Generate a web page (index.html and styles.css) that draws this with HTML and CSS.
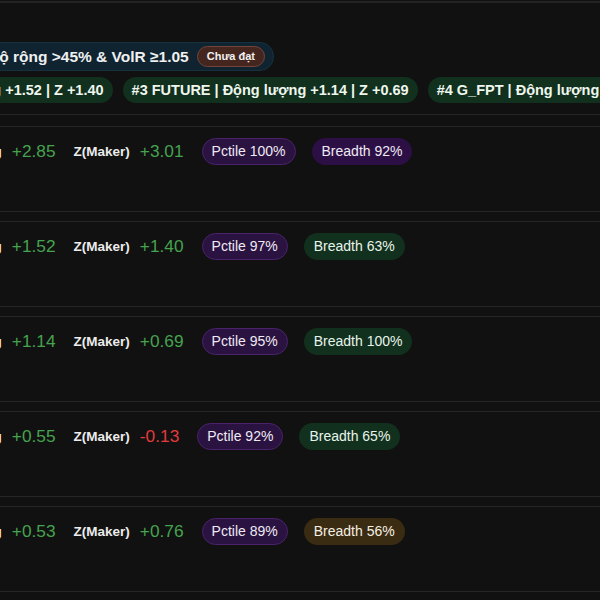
FILE: index.html
```html
<!DOCTYPE html>
<html lang="vi">
<head>
    <meta charset="UTF-8">
    <meta name="viewport" content="width=device-width, initial-scale=1.0">
    <title>Bảng xếp hạng động lượng</title>
    <link rel="stylesheet" href="styles.css">
</head>
<body>
    <div class="board">
        <div class="summary">
            <div class="condition">
                <span class="condition-text">Độ rộng &gt;45% &amp; VolR ≥1.05</span>
                <span class="badge-fail">Chưa đạt</span>
            </div>
            <div class="leaders">
                <span class="leader">#2 VN30 | Động lượng +1.52 | Z +1.40</span>
                <span class="leader">#3 FUTURE | Động lượng +1.14 | Z +0.69</span>
                <span class="leader">#4 G_FPT | Động lượng +0.55 | Z -0.13</span>
            </div>
        </div>

        <div class="rows">
            <div class="row">
                <div class="metrics">
                    <span class="label">Động lượng</span>
                    <span class="value up">+2.85</span>
                    <span class="label">Z(Maker)</span>
                    <span class="value up">+3.01</span>
                    <span class="pill pctile">Pctile 100%</span>
                    <span class="pill breadth-purple">Breadth 92%</span>
                </div>
            </div>
            <div class="row">
                <div class="metrics">
                    <span class="label">Động lượng</span>
                    <span class="value up">+1.52</span>
                    <span class="label">Z(Maker)</span>
                    <span class="value up">+1.40</span>
                    <span class="pill pctile">Pctile 97%</span>
                    <span class="pill breadth-green">Breadth 63%</span>
                </div>
            </div>
            <div class="row">
                <div class="metrics">
                    <span class="label">Động lượng</span>
                    <span class="value up">+1.14</span>
                    <span class="label">Z(Maker)</span>
                    <span class="value up">+0.69</span>
                    <span class="pill pctile">Pctile 95%</span>
                    <span class="pill breadth-green">Breadth 100%</span>
                </div>
            </div>
            <div class="row">
                <div class="metrics">
                    <span class="label">Động lượng</span>
                    <span class="value up">+0.55</span>
                    <span class="label">Z(Maker)</span>
                    <span class="value down">-0.13</span>
                    <span class="pill pctile">Pctile 92%</span>
                    <span class="pill breadth-green">Breadth 65%</span>
                </div>
            </div>
            <div class="row">
                <div class="metrics">
                    <span class="label">Động lượng</span>
                    <span class="value up">+0.53</span>
                    <span class="label">Z(Maker)</span>
                    <span class="value up">+0.76</span>
                    <span class="pill pctile">Pctile 89%</span>
                    <span class="pill breadth-amber">Breadth 56%</span>
                </div>
            </div>
        </div>
    </div>
</body>
</html>
```

FILE: styles.css
```css
body {
    margin: 0;
    padding: 0;
    background-color: #111111;
    color: #f0f0f0;
    font-family: "Liberation Sans", Arial, sans-serif;
    overflow: hidden;
}

.board {
    margin: 0 -40px;
    padding-top: 1px;
}

.summary {
    border-top: 2px solid #232323;
    border-bottom: 1px solid #262626;
    padding: 39px 0 11px;
}

.condition {
    display: inline-flex;
    align-items: center;
    gap: 8px;
    margin-left: 15px;
    padding: 3px 8px 3px 12px;
    background-color: #0f2430;
    border: 1px solid #15313f;
    border-radius: 14px;
}

.condition-text {
    font-size: 15.5px;
    font-weight: bold;
    line-height: 19px;
}

.badge-fail {
    padding: 2px 9px;
    font-size: 11px;
    font-weight: bold;
    line-height: 15px;
    background-color: #45261f;
    border: 1.5px solid #74453a;
    border-radius: 11px;
}

.leaders {
    display: flex;
    gap: 10px;
    margin-top: 6px;
    margin-left: -120px;
    white-space: nowrap;
}

.leader {
    padding: 4px 9px;
    font-size: 14.5px;
    font-weight: bold;
    line-height: 18px;
    color: #eef6ee;
    background-color: #11301d;
    border-radius: 13px;
}

.rows {
    display: flex;
    flex-direction: column;
    gap: 9px;
    margin-top: 11px;
}

.row {
    height: 73px;
    padding-top: 11px;
    border-top: 1px solid #262626;
    border-bottom: 1px solid #262626;
}

.metrics {
    display: flex;
    align-items: center;
    margin-left: -36px;
    white-space: nowrap;
}

.label {
    margin-right: 10px;
    font-size: 13.5px;
    font-weight: bold;
    color: #ececec;
}

.value {
    margin-right: 18px;
    font-size: 17.3px;
}

.up {
    color: #45a34f;
}

.down {
    color: #e23b3b;
}

.pill {
    padding: 4px 9px;
    margin-right: 16px;
    font-size: 14px;
    line-height: 17px;
    color: #f0eaf4;
    border: 1px solid transparent;
    border-radius: 14px;
}

.pctile {
    background-color: #2a1340;
    border-color: #4a236c;
}

.breadth-purple {
    background-color: #2c0f45;
}

.breadth-green {
    background-color: #11301e;
    color: #e8f4ea;
}

.breadth-amber {
    background-color: #3a2c12;
    color: #f5efe2;
}
```
